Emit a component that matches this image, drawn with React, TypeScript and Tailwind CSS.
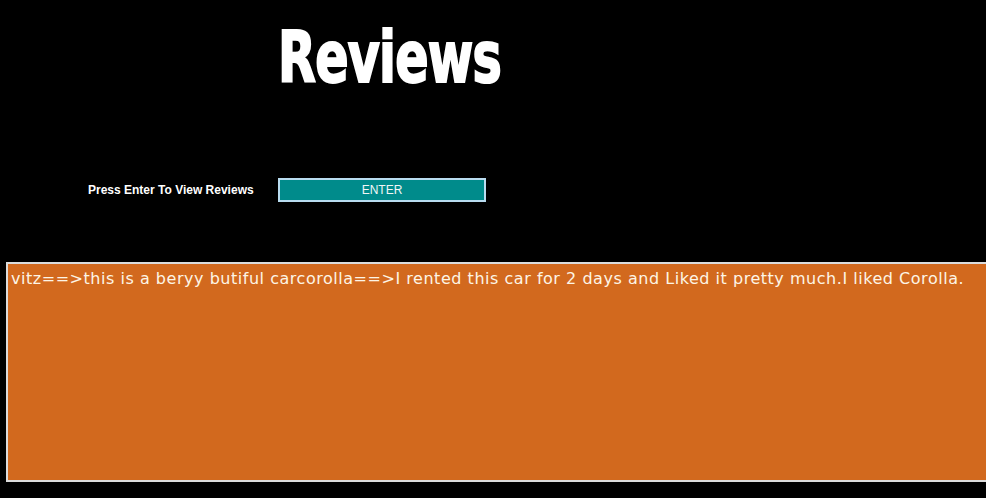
export default function App() {
  return (
    <div className="flex h-[498px] w-[986px] flex-col overflow-hidden bg-black">
      <div className="pl-[278px] pt-[20px]">
        <h1 className="origin-left scale-x-[0.76] font-['DejaVu_Sans_Condensed','Liberation_Sans',sans-serif] text-[72px] leading-[74px] font-bold tracking-[-1px] text-white [-webkit-text-stroke:2px_white]">
          Reviews
        </h1>
      </div>

      <div className="mt-[84px] flex items-center">
        <span className="ml-[88px] w-[190px] font-['Liberation_Sans',sans-serif] text-[12px] font-bold text-white">
          Press Enter To View Reviews
        </span>
        <button className="h-[24px] w-[208px] border-2 border-[#b9dcf0] bg-[#008b8b] font-['Liberation_Sans',sans-serif] text-[12px] text-[#f0f6f6]">
          ENTER
        </button>
      </div>

      <div className="mt-[60px] ml-[6px] h-[220px] w-[1000px] shrink-0 border-2 border-[#dcdcdc] bg-[#d2691e] px-[3px] pt-[5px]">
        <p className="font-['DejaVu_Sans',sans-serif] text-[16px] leading-[20px] tracking-[0.53px] text-[#fdf5e6]">
          vitz==&gt;this is a beryy butiful carcorolla==&gt;I rented this car for 2 days and Liked it pretty much.I liked Corolla.
        </p>
      </div>
    </div>
  );
}
